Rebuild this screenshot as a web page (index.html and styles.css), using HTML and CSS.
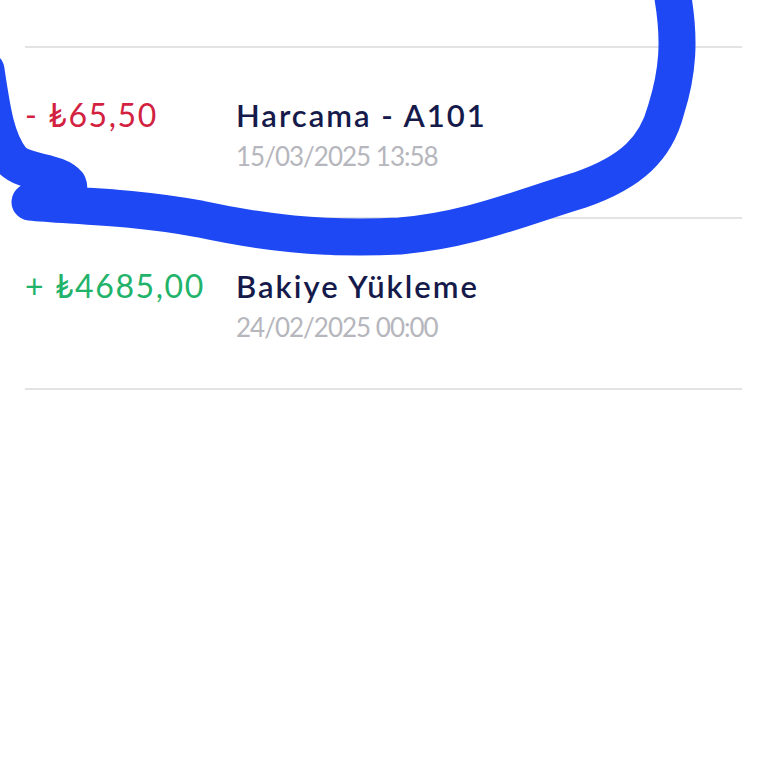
FILE: index.html
```html
<!DOCTYPE html>
<html lang="tr">

<head>
    <meta charset="UTF-8">
    <meta name="viewport" content="width=device-width, initial-scale=1.0">
    <title>Hesap Hareketleri</title>
    <link rel="stylesheet" href="styles.css">
</head>

<body>
    <div class="page">
        <ul class="tx-list">
            <li class="tx-item">
                <div class="tx-amount minus">- ₺65,50</div>
                <div class="tx-info">
                    <div class="tx-title">Harcama - A101</div>
                    <div class="tx-date">15/03/2025 13:58</div>
                </div>
            </li>
            <li class="tx-item">
                <div class="tx-amount plus">+ ₺4685,00</div>
                <div class="tx-info">
                    <div class="tx-title">Bakiye Yükleme</div>
                    <div class="tx-date">24/02/2025 00:00</div>
                </div>
            </li>
        </ul>

        <!-- elle çizilmiş işaret -->
        <svg class="scribble" width="768" height="768" viewBox="0 0 768 768">
            <path d="M-14 70 C-8 110 -4 140 12 160 C26 174 56 170 68 184 C74 198 40 194 30 202
                     C70 206 130 206 200 219 C260 232 320 240 400 236 C470 230 520 208 580 190
                     C632 172 656 148 666 110 C678 72 680 40 673 -2"
                fill="none" stroke="#1e48f3" stroke-width="37" stroke-linecap="round" stroke-linejoin="round" />
        </svg>
    </div>
</body>

</html>
```

FILE: styles.css
```css
:root {
    --lineColor: #e3e3e6;
    --titleColor: #151a4b;
    --dateColor: #b6b6bd;
    --minusColor: #d2223f;
    --plusColor: #22b36b;
}

* {
    padding: 0;
    margin: 0;
    box-sizing: border-box;
}

body {
    background-color: #fff;
    font-family: Lato, "DejaVu Sans", sans-serif;
    overflow: hidden;
}

.page {
    position: relative;
    width: 768px;
    height: 768px;
    padding: 46px 26px 0 25px;
}

.tx-list {
    list-style: none;
    border-bottom: 2px solid var(--lineColor);
}

.tx-item {
    display: flex;
    height: 171px;
    padding-top: 47px;
    border-top: 2px solid var(--lineColor);
}

.tx-amount {
    width: 211px;
    font-size: 32px;
    line-height: 40px;
    letter-spacing: 1.6px;
}

.tx-amount.minus {
    color: var(--minusColor);
}

.tx-amount.plus {
    color: var(--plusColor);
}

.tx-title {
    font-size: 31px;
    line-height: 40px;
    font-weight: 600;
    color: var(--titleColor);
    letter-spacing: 2px;
}

.tx-date {
    margin-top: 5px;
    font-size: 26px;
    line-height: 32px;
    color: var(--dateColor);
    letter-spacing: -1px;
}

/* işaret çizimi sayfanın üstünde durur */
.scribble {
    position: absolute;
    top: 0;
    left: 0;
    pointer-events: none;
}
```
